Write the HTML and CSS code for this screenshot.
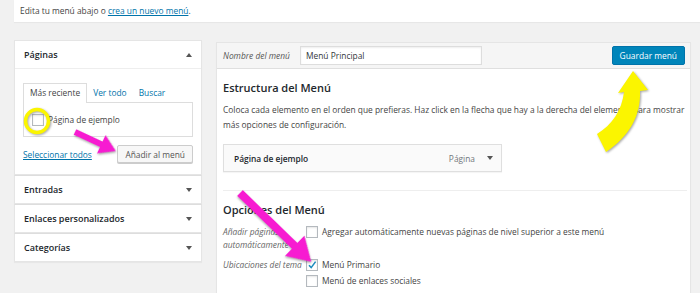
FILE: index.html
```html
<!DOCTYPE html>
<html lang="es">
<head>
    <meta charset="UTF-8">
    <meta name="viewport" content="width=device-width, initial-scale=1.0">
    <title>Menús</title>
    <link rel="stylesheet" href="styles.css">
</head>
<body>
    <div class="notice">Edita tu menú abajo o <a href="#">crea un nuevo menú</a>.</div>

    <div class="columns">
        <div class="sidebar">
            <div class="box open">
                <div class="box-head"><span>Páginas</span><i class="caret up"></i></div>
                <div class="box-body">
                    <div class="tabs">
                        <span class="tab active">Más reciente</span>
                        <a class="tab" href="#">Ver todo</a>
                        <a class="tab" href="#">Buscar</a>
                    </div>
                    <div class="tab-panel">
                        <label class="check"><span class="cb"></span>Página de ejemplo</label>
                    </div>
                    <div class="box-actions">
                        <a href="#">Seleccionar todos</a>
                        <button class="btn">Añadir al menú</button>
                    </div>
                </div>
            </div>
            <div class="box"><div class="box-head"><span>Entradas</span><i class="caret"></i></div></div>
            <div class="box"><div class="box-head"><span>Enlaces personalizados</span><i class="caret"></i></div></div>
            <div class="box"><div class="box-head"><span>Categorías</span><i class="caret"></i></div></div>
        </div>

        <div class="editor">
            <div class="editor-head">
                <label class="name-label">Nombre del menú</label>
                <input class="name-input" type="text" value="Menú Principal">
                <button class="btn-primary">Guardar menú</button>
            </div>
            <div class="editor-body">
                <h3>Estructura del Menú</h3>
                <p>Coloca cada elemento en el orden que prefieras. Haz click en la flecha que hay a la derecha del elemento para mostrar más opciones de configuración.</p>
                <div class="menu-item">
                    <span class="item-title">Página de ejemplo</span>
                    <span class="item-type">Página</span>
                    <i class="caret"></i>
                </div>
                <div class="settings">
                    <h3>Opciones del Menú</h3>
                    <div class="setting-row">
                        <div class="setting-label">Añadir páginas automáticamente</div>
                        <div class="setting-input">
                            <label class="check"><span class="cb"></span>Agregar automáticamente nuevas páginas de nivel superior a este menú</label>
                        </div>
                    </div>
                    <div class="setting-row">
                        <div class="setting-label single">Ubicaciones del tema</div>
                        <div class="setting-input">
                            <label class="check"><span class="cb"><svg viewBox="0 0 12 12" width="12" height="12"><path d="M3 6.2 L5.2 8.6 L9.6 2.6" fill="none" stroke="#1e8cbe" stroke-width="1.6"/></svg></span>Menú Primario</label>
                            <label class="check"><span class="cb"></span>Menú de enlaces sociales</label>
                        </div>
                    </div>
                </div>
            </div>
        </div>
    </div>

    <svg class="marks" width="700" height="293" viewBox="0 0 700 293">
        <circle class="mark" cx="37" cy="121" r="11.5" fill="none" stroke="#fbf500" stroke-width="3.5"/>
        <g class="mark" transform="translate(75,132) rotate(25)">
            <polygon points="0,-3 29,-3 29,-10 45,0 29,10 29,3 0,3" fill="#f71bd1"/>
        </g>
        <g class="mark" transform="translate(240,193) rotate(44)">
            <polygon points="0,-4 76,-4 76,-14 99,0 76,14 76,4 0,4" fill="#f71bd1"/>
        </g>
        <path class="mark" d="M633,71 L648,90 L640,91 C641,115 630,136 606,152 L597,134 C612,125 622,110 624,92 L618,93 Z" fill="#fbf500"/>
    </svg>
</body>
</html>
```

FILE: styles.css
```css
body {
    margin: 0;
    height: 293px;
    overflow: hidden;
    position: relative;
    background: #f1f1f1;
    font-family: "Open Sans", "Noto Sans", sans-serif;
    font-size: 8.4px;
    color: #444;
}
a { color: #0073aa; }
button, input { font-family: inherit; font-size: inherit; }

.notice {
    margin-left: 14px;
    height: 22px;
    line-height: 22px;
    padding-left: 6px;
    background: #fff;
    box-shadow: 0 1px 1px rgba(0, 0, 0, 0.04);
}

.columns {
    display: flex;
    align-items: flex-start;
    gap: 14px;
    padding: 18px 9px 0 14px;
}

/* left column */
.sidebar { width: 188px; flex: none; }
.box {
    background: #fff;
    border: 1px solid #e5e5e5;
    box-shadow: 0 1px 1px rgba(0, 0, 0, 0.04);
}
.box + .box { border-top-color: #ddd; }
.box-head {
    height: 27px;
    padding: 0 9px;
    display: flex;
    align-items: center;
    justify-content: space-between;
    font-weight: 600;
    font-size: 9px;
    color: #23282d;
}
.box.open .box-head { border-bottom: 1px solid #eee; }
.box-body { padding: 14px 8px 11px; }

.tabs { display: flex; height: 19px; }
.tab {
    padding: 0 6px;
    line-height: 19px;
    text-decoration: none;
}
.tab.active {
    border: 1px solid #ddd;
    border-bottom: none;
    background: #fff;
    margin-bottom: -1px;
    position: relative;
    line-height: 18px;
    color: #444;
}
.tab-panel {
    height: 33px;
    border: 1px solid #ddd;
    padding: 0 8px;
    display: flex;
    align-items: center;
}
.box-actions {
    margin-top: 8px;
    display: flex;
    align-items: center;
    justify-content: space-between;
}
.btn {
    height: 18px;
    padding: 0 7px;
    background: #f7f7f7;
    border: 1px solid #ccc;
    border-radius: 2px;
    box-shadow: 0 1px 0 #ccc;
    color: #555;
}

.caret {
    width: 0;
    height: 0;
    border-left: 3px solid transparent;
    border-right: 3px solid transparent;
    border-top: 4px solid #555;
}
.caret.up { border-top: none; border-bottom: 4px solid #555; }

.check {
    display: flex;
    align-items: center;
    gap: 4px;
    line-height: 13px;
}
.cb {
    width: 12px;
    height: 12px;
    box-sizing: border-box;
    border: 1px solid #b4b9be;
    background: #fff;
    box-shadow: inset 0 1px 2px rgba(0, 0, 0, 0.1);
    flex: none;
    position: relative;
}
.cb svg { position: absolute; left: -1px; top: -1px; }

/* editor */
.editor {
    flex: 1;
    margin-top: 2px;
    height: 260px;
    background: #fff;
    border: 1px solid #e5e5e5;
    box-shadow: 0 1px 1px rgba(0, 0, 0, 0.04);
}
.editor-head {
    height: 25px;
    padding: 0 5px 0 6px;
    display: flex;
    align-items: center;
    background: #f5f5f5;
    border-bottom: 1px solid #dfdfdf;
}
.name-label { font-style: italic; color: #555; width: 77px; }
.name-input {
    width: 182px;
    height: 19px;
    box-sizing: border-box;
    padding: 0 5px;
    border: 1px solid #ddd;
    box-shadow: inset 0 1px 2px rgba(0, 0, 0, 0.07);
    color: #32373c;
}
.btn-primary {
    margin-left: auto;
    height: 19px;
    padding: 0 7px;
    background: #0085ba;
    border: 1px solid #0073aa;
    border-radius: 2px;
    color: #fff;
}

.editor-body { padding: 12px 3px 0 6px; }
h3 {
    margin: 0;
    font-size: 11px;
    line-height: 14px;
    font-weight: 600;
    color: #23282d;
}
p { margin: 7px 0 0; line-height: 15px; }

.menu-item {
    width: 279px;
    height: 28px;
    box-sizing: border-box;
    margin-top: 12px;
    padding: 0 8px 0 10px;
    display: flex;
    align-items: center;
    background: #fafafa;
    border: 1px solid #dfdfdf;
    box-shadow: 0 1px 1px rgba(0, 0, 0, 0.04);
}
.item-title { flex: 1; font-weight: 600; color: #23282d; }
.item-type { color: #72777c; margin-right: 12px; }

.settings {
    margin-top: 18px;
    padding-top: 12px;
    border-top: 1px solid #eee;
}
.setting-row { display: flex; margin-top: 8px; }
.setting-row + .setting-row { margin-top: 7px; }
.setting-label {
    width: 77px;
    flex: none;
    line-height: 13px;
    font-style: italic;
    color: #666;
}
.setting-label.single { white-space: nowrap; }
.setting-input {
    margin-left: 6px;
    display: flex;
    flex-direction: column;
    gap: 3px;
}

/* annotations drawn over the screenshot */
.marks { position: absolute; left: 0; top: 0; pointer-events: none; }
.mark { filter: drop-shadow(1px 1px 1px rgba(0, 0, 0, 0.35)); }
```
